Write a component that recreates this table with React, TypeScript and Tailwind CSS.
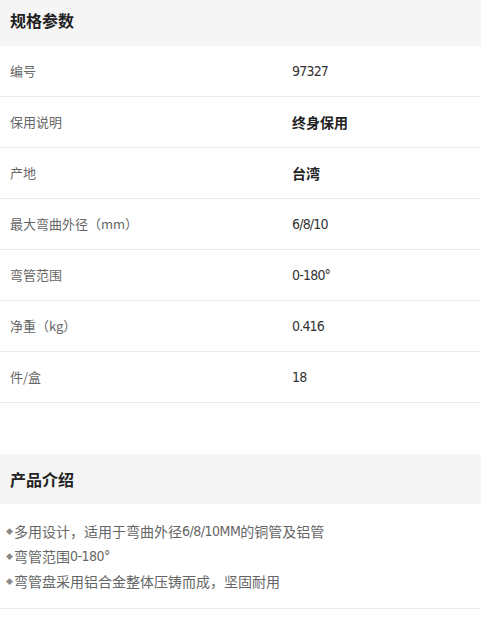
const specs: { label: string; value: string; bold?: boolean }[] = [
  { label: "编号", value: "97327" },
  { label: "保用说明", value: "终身保用", bold: true },
  { label: "产地", value: "台湾", bold: true },
  { label: "最大弯曲外径（mm）", value: "6/8/10" },
  { label: "弯管范围", value: "0-180°" },
  { label: "净重（kg）", value: "0.416" },
  { label: "件/盒", value: "18" },
];

const cjk = "font-['Noto_Sans_CJK_SC','Liberation_Sans',sans-serif]";
const num = "font-['Liberation_Sans_Narrow','DejaVu_Sans_Condensed',sans-serif]";

export default function App() {
  return (
    <div className={`w-[481px] h-[629px] bg-white overflow-hidden ${cjk}`}>
      <div className="h-[46px] bg-[#f5f5f5] flex items-center px-[10px] pb-[6px]">
        <h2 className="text-[16px] font-bold text-[#222]">规格参数</h2>
      </div>
      {specs.map((s) => (
        <div
          key={s.label}
          className="h-[51px] flex items-center border-b border-[#ececec] text-[13px]"
        >
          <div className="w-[292px] pl-[10px] text-[#666]">{s.label}</div>
          <div
            className={
              s.bold
                ? "text-[14px] font-bold text-[#222]"
                : `${num} text-[14px] tracking-[-0.8px] text-[#333]`
            }
          >
            {s.value}
          </div>
        </div>
      ))}
      <div className="h-[51px]" />
      <div className="h-[50px] bg-[#f5f5f5] flex items-center px-[10px]">
        <h2 className="text-[16px] font-bold text-[#222]">产品介绍</h2>
      </div>
      <ul className="pt-[17px] pb-[17px] px-[6px] border-b border-[#ececec] flex flex-col gap-[5px] text-[14px] text-[#666]">
        <li className="h-[20px] flex items-center">
          <span className="text-[7px] text-[#888] mr-[1px]">◆</span>
          多用设计，适用于弯曲外径<span className={`${num} tracking-[-0.5px]`}>6/8/10MM</span>的铜管及铝管
        </li>
        <li className="h-[20px] flex items-center">
          <span className="text-[7px] text-[#888] mr-[1px]">◆</span>
          弯管范围<span className={`${num} tracking-[-0.5px]`}>0-180°</span>
        </li>
        <li className="h-[20px] flex items-center">
          <span className="text-[7px] text-[#888] mr-[1px]">◆</span>
          弯管盘采用铝合金整体压铸而成，坚固耐用
        </li>
      </ul>
    </div>
  );
}
